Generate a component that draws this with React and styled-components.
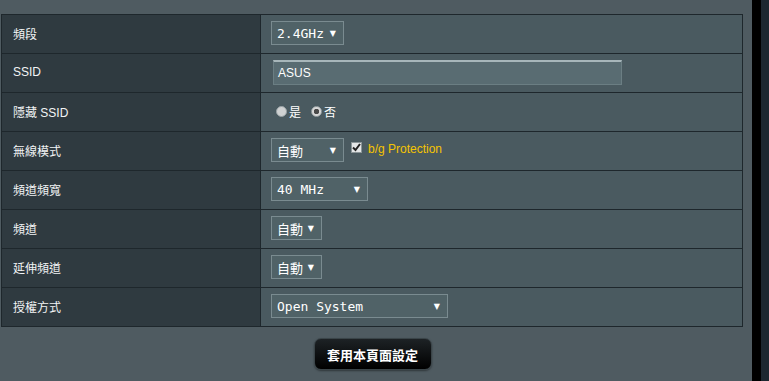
import React from 'react';
import styled, { createGlobalStyle } from 'styled-components';

const GlobalStyle = createGlobalStyle`
  html, body {
    margin: 0;
    padding: 0;
    background: #4f5b61;
    overflow: hidden;
  }
`;

const Page = styled.div`
  display: flex;
  width: 769px;
  height: 381px;
  font-family: "Liberation Sans", "Noto Sans CJK TC", sans-serif;
`;

const Main = styled.div`
  width: 752px;
  padding: 14px 0 0 1px;
  box-sizing: border-box;
  display: flex;
  flex-direction: column;
`;

const Scrollbar = styled.div`
  width: 17px;
  display: flex;
  background: #1c2730;

  &::before {
    content: '';
    width: 9px;
    background: #000;
  }
`;

const Table = styled.div`
  width: 742px;
  border: 1px solid #1e272c;
  border-bottom: none;
  box-sizing: border-box;
  display: grid;
  grid-template-columns: 259px 1fr;
`;

const LabelCell = styled.div`
  height: 38px;
  border-bottom: 1px solid #1e272c;
  border-right: 1px solid #1e272c;
  background: #2f3a40;
  color: #f2f4f5;
  font-size: 12px;
  display: flex;
  align-items: center;
  padding: 0 0 2px 11px;
  box-sizing: border-box;
  height: 39px;
`;

const ValueCell = styled.div`
  height: 39px;
  box-sizing: border-box;
  border-bottom: 1px solid #1e272c;
  background: #4a5a60;
  display: flex;
  align-items: center;
  gap: 7px;
  padding: 0 0 2px 10px;
`;

const Select = styled.div`
  width: ${p => p.$w}px;
  height: 24px;
  box-sizing: border-box;
  border: 1px solid #7a8b90;
  background: #506267;
  color: #ffffff;
  font-family: "DejaVu Sans Mono", "Noto Sans CJK TC", monospace;
  font-size: 13px;
  display: flex;
  align-items: center;
  justify-content: space-between;
  padding: 0 7px 0 5px;

  &::after {
    content: '▼';
    font-size: 8px;
    font-family: "DejaVu Sans", sans-serif;
  }
`;

const TextInput = styled.div`
  width: 349px;
  height: 25px;
  box-sizing: border-box;
  margin-left: 2px;
  border: 1px solid #6b7e83;
  border-top: 2px solid #a7b6ba;
  background: #596c72;
  color: #ffffff;
  font-size: 12px;
  display: flex;
  align-items: center;
  padding-left: 4px;
`;

const RadioGroup = styled.label`
  display: flex;
  align-items: center;
  gap: 2px;
  color: #ffffff;
  font-size: 12px;
  margin-left: 5px;
  margin-right: -2px;
`;

const Radio = styled.span`
  width: 11px;
  height: 11px;
  border-radius: 50%;
  box-sizing: border-box;
  background: ${p => (p.$checked ? 'radial-gradient(circle, #4a4a4a 0 2.5px, #d8d8d8 3px)' : '#cfd1d2')};
  border: 1px solid #9aa3a6;
`;

const CheckBox = styled.span`
  width: 11px;
  height: 11px;
  box-sizing: border-box;
  background: #e4e6e7;
  border: 1px solid #8c9699;
  display: flex;
  align-items: center;
  justify-content: center;
  margin-top: -6px;
`;

const Protection = styled.span`
  color: #f5c400;
  font-size: 12px;
  margin-left: -1px;
  margin-top: -2px;
`;

const Footer = styled.div`
  display: flex;
  justify-content: center;
  padding-top: 11px;
  padding-right: 8px;
`;

const ApplyButton = styled.button`
  width: 118px;
  height: 32px;
  border-radius: 7px;
  border: 1px solid #3a4448;
  background: linear-gradient(#1d2225, #000000);
  box-shadow: 0 1px 2px rgba(0, 0, 0, 0.4);
  color: #ffffff;
  font-family: "Liberation Sans", "Noto Sans CJK TC", sans-serif;
  font-weight: bold;
  font-size: 13px;
  padding: 0;
`;

const Check = () => (
  <svg width="9" height="9" viewBox="0 0 9 9">
    <path d="M1 4.5 L3.5 7 L8 1" stroke="#222" strokeWidth="2" fill="none" />
  </svg>
);

const rows = [
  { label: '頻段', value: <Select $w={73}>2.4GHz</Select> },
  { label: 'SSID', value: <TextInput>ASUS</TextInput> },
  {
    label: '隱藏 SSID',
    value: (
      <>
        <RadioGroup><Radio />是</RadioGroup>
        <RadioGroup><Radio $checked />否</RadioGroup>
      </>
    ),
  },
  {
    label: '無線模式',
    value: (
      <>
        <Select $w={73}>自動</Select>
        <CheckBox><Check /></CheckBox>
        <Protection>b/g Protection</Protection>
      </>
    ),
  },
  { label: '頻道頻寬', value: <Select $w={97}>40 MHz</Select> },
  { label: '頻道', value: <Select $w={51}>自動</Select> },
  { label: '延伸頻道', value: <Select $w={51}>自動</Select> },
  { label: '授權方式', value: <Select $w={177}>Open System</Select> },
];

export default function App() {
  return (
    <Page>
      <GlobalStyle />
      <Main>
        <Table>
          {rows.map(r => (
            <React.Fragment key={r.label}>
              <LabelCell>{r.label}</LabelCell>
              <ValueCell>{r.value}</ValueCell>
            </React.Fragment>
          ))}
        </Table>
        <Footer>
          <ApplyButton>套用本頁面設定</ApplyButton>
        </Footer>
      </Main>
      <Scrollbar />
    </Page>
  );
}
